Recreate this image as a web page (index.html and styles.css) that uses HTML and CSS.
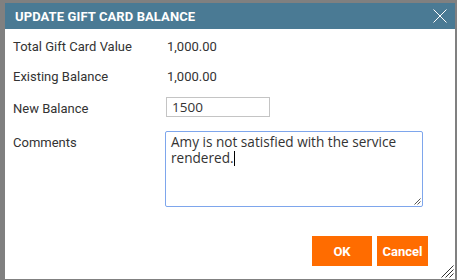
FILE: index.html
```html
<!DOCTYPE html>
<html lang="en">
<head>
    <meta charset="UTF-8">
    <title>Update Gift Card Balance</title>
    <link rel="stylesheet" href="styles.css">
</head>
<body>
    <div class="dialog">
        <div class="dialog-header">
            <span class="dialog-title">UPDATE GIFT CARD BALANCE</span>
            <svg class="close-icon" width="14" height="14" viewBox="0 0 14 14">
                <path d="M0.5 0.5 L13.5 13.5 M13.5 0.5 L0.5 13.5" stroke="#fff" stroke-width="1" fill="none"/>
            </svg>
        </div>
        <div class="dialog-body">
            <div class="row row-total">
                <div class="label">Total Gift Card Value</div>
                <div class="value">1,000.00</div>
            </div>
            <div class="row row-existing">
                <div class="label">Existing Balance</div>
                <div class="value">1,000.00</div>
            </div>
            <div class="row row-new">
                <div class="label">New Balance</div>
                <input class="text-input" type="text" value="1500">
            </div>
            <div class="row row-comments">
                <div class="label">Comments</div>
                <div class="textarea">Amy is not satisfied with the service rendered.<span class="caret"></span>
                    <svg class="grip small" width="8" height="8" viewBox="0 0 8 8">
                        <path d="M7.5 1.5 L1.5 7.5 M7.5 4.5 L4.5 7.5" stroke="#555" stroke-width="1" fill="none"/>
                    </svg>
                </div>
            </div>
            <div class="actions">
                <button class="btn btn-ok">OK</button>
                <button class="btn btn-cancel">Cancel</button>
            </div>
        </div>
        <svg class="grip dialog-grip" width="14" height="14" viewBox="0 0 14 14">
            <path d="M13.5 1.5 L1.5 13.5 M13.5 5.5 L5.5 13.5 M13.5 9.5 L9.5 13.5" stroke="#333" stroke-width="1" fill="none"/>
        </svg>
    </div>
</body>
</html>
```

FILE: styles.css
```css
body {
    margin: 0;
    padding: 3px 2px 1px 5px;
    background: #808080;
    font-family: Roboto, 'Liberation Sans', Arial, sans-serif;
}

.dialog {
    position: relative;
    height: 276px;
    background: #fff;
}

.dialog-header {
    height: 26px;
    background: #4a7a94;
    display: flex;
    align-items: center;
    justify-content: space-between;
    padding: 0 8px 0 10px;
}

.dialog-title {
    color: #fff;
    font-weight: bold;
    font-size: 13px;
    letter-spacing: 0.1px;
}

.close-icon {
    display: block;
}

.dialog-body {
    padding: 6px 0 0 8px;
}

.row {
    display: flex;
    align-items: flex-start;
}

.label {
    width: 154px;
    padding-top: 1.5px;
    font-size: 13px;
    line-height: 20px;
    color: #333;
}

.value {
    padding-top: 1.5px;
    font-size: 13px;
    line-height: 20px;
    color: #333;
}

.row-total {
    height: 30px;
}

.row-existing {
    height: 32px;
}

.row-new {
    height: 34px;
}

.text-input {
    box-sizing: border-box;
    width: 104px;
    height: 20px;
    margin: 0 0 0 -1px;
    padding: 0 5px;
    border: 1px solid #c4c4c4;
    font-family: 'Open Sans', 'Noto Sans', sans-serif;
    font-size: 13.5px;
    color: #333;
}

.textarea {
    position: relative;
    box-sizing: border-box;
    width: 258px;
    height: 76px;
    margin-left: -2px;
    padding: 2px 5px;
    border: 1px solid #7ea6ec;
    border-radius: 2px;
    font-family: 'Open Sans', 'Noto Sans', sans-serif;
    font-size: 13.6px;
    line-height: 16px;
    color: #333;
}

.caret {
    display: inline-block;
    width: 1px;
    height: 15px;
    background: #000;
    vertical-align: -3px;
}

.grip.small {
    position: absolute;
    right: 1px;
    bottom: 1px;
}

.actions {
    display: flex;
    justify-content: flex-end;
    gap: 5px;
    padding: 29px 27px 0 0;
}

.btn {
    height: 30px;
    border: none;
    background: #ff6c00;
    color: #fff;
    font-family: Roboto, 'Liberation Sans', Arial, sans-serif;
    font-weight: bold;
    font-size: 13px;
    padding: 0;
}

.btn-ok {
    width: 60px;
}

.btn-cancel {
    width: 51px;
}

.dialog-grip {
    position: absolute;
    right: 1px;
    bottom: 1px;
}
```
